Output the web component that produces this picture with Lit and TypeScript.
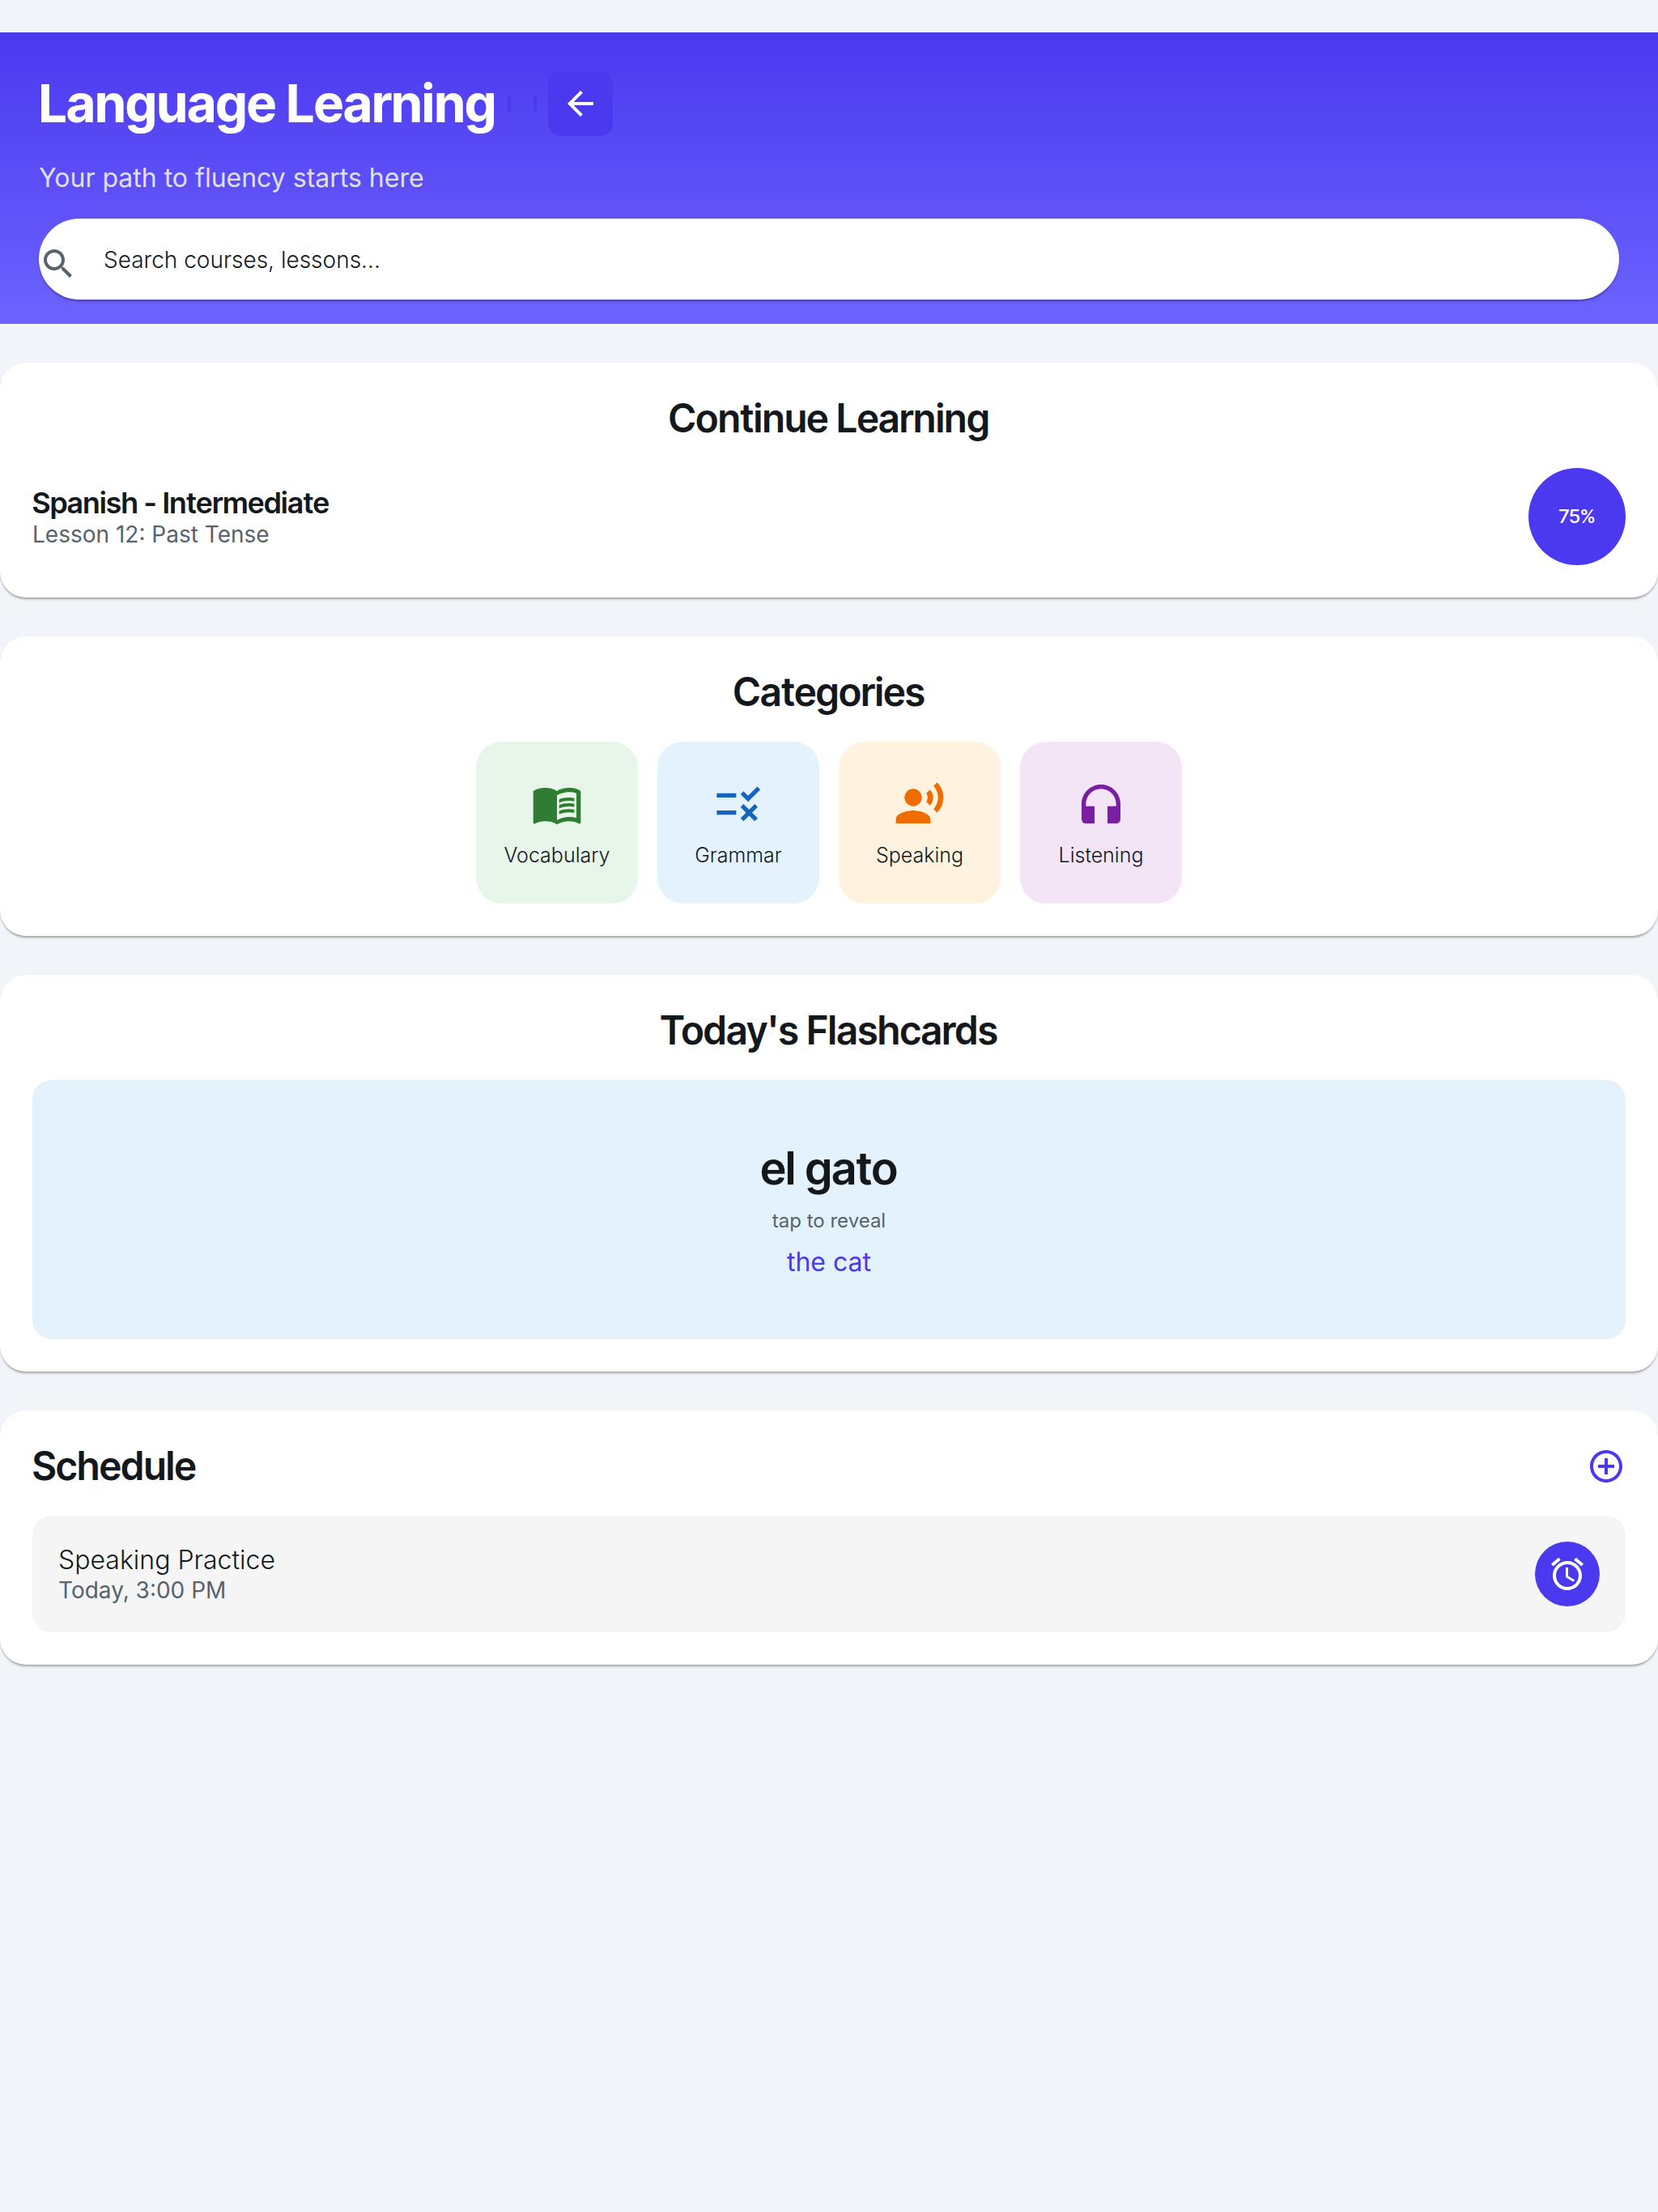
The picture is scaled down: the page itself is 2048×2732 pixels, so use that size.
import { LitElement, html, css, svg } from "lit";
import { customElement, property } from "lit/decorators.js";

const ICONS: Record<string, string[]> = {
  back: ["M20 11H7.83l5.59-5.59L12 4l-8 8 8 8 1.41-1.41L7.83 13H20v-2z"],
  search: [
    "M15.5 14h-.79l-.28-.27C15.41 12.59 16 11.11 16 9.5 16 5.91 13.09 3 9.5 3S3 5.91 3 9.5 5.91 16 9.5 16c1.61 0 3.09-.59 4.23-1.57l.27.28v.79l5 4.99L20.49 19l-4.99-5zm-6 0C7.01 14 5 11.99 5 9.5S7.01 5 9.5 5 14 7.01 14 9.5 11.99 14 9.5 14z",
  ],
  book: [
    "M21 5c-1.11-.35-2.33-.5-3.5-.5-1.95 0-4.05.4-5.5 1.5-1.45-1.1-3.55-1.5-5.5-1.5S2.45 4.9 1 6v14.65c0 .25.25.5.5.5.1 0 .15-.05.25-.05C3.1 20.45 5.05 20 6.5 20c1.95 0 4.05.4 5.5 1.5 1.35-.85 3.8-1.5 5.5-1.5 1.65 0 3.35.3 4.75 1.05.1.05.15.05.25.05.25 0 .5-.25.5-.5V6c-.6-.45-1.25-.75-2-1zm0 13.5c-1.1-.35-2.3-.5-3.5-.5-1.7 0-4.15.65-5.5 1.5V8c1.35-.85 3.8-1.5 5.5-1.5 1.2 0 2.4.15 3.5.5v11.5z",
    "M17.5 10.5c.88 0 1.73.09 2.5.26V9.24c-.79-.15-1.64-.24-2.5-.24-1.7 0-3.24.29-4.5.83v1.66c1.13-.64 2.7-.99 4.5-.99zM13 12.49v1.66c1.13-.64 2.7-.99 4.5-.99.88 0 1.73.09 2.5.26V11.9c-.79-.15-1.64-.24-2.5-.24-1.7 0-3.24.3-4.5.83zM17.5 14.33c-1.7 0-3.24.29-4.5.83v1.66c1.13-.64 2.7-.99 4.5-.99.88 0 1.73.09 2.5.26v-1.52c-.79-.16-1.64-.24-2.5-.24z",
  ],
  rule: [
    "M16.54 11L13 7.46l1.41-1.41 2.12 2.12 4.24-4.24 1.41 1.41L16.54 11zM11 7H2v2h9V7zm10 6.41L19.59 12 17 14.59 14.41 12 13 13.41 15.59 16 13 18.59 14.41 20 17 17.41 19.59 20 21 18.59 18.41 16 21 13.41zM11 15H2v2h9v-2z",
  ],
  voice: [
    "M9 5a4 4 0 1 0 0 8 4 4 0 1 0 0-8z",
    "M9 15c-2.67 0-8 1.34-8 4v2h16v-2c0-2.66-5.33-4-8-4zm7.76-9.64l-1.68 1.69c.84 1.18.84 2.71 0 3.89l1.68 1.69c2.02-2.02 2.02-5.07 0-7.27zM20.07 2l-1.63 1.63c2.77 3.02 2.77 7.56 0 10.74L20.07 16c3.9-3.89 3.91-9.95 0-14z",
  ],
  headphones: [
    "M12 3c-4.97 0-9 4.03-9 9v7c0 1.1.9 2 2 2h4v-8H5v-1c0-3.87 3.13-7 7-7s7 3.13 7 7v1h-4v8h4c1.1 0 2-.9 2-2v-7c0-4.97-4.03-9-9-9z",
  ],
  add: [
    "M13 7h-2v4H7v2h4v4h2v-4h4v-2h-4V7zm-1-5C6.48 2 2 6.48 2 12s4.48 10 10 10 10-4.48 10-10S17.52 2 12 2zm0 18c-4.41 0-8-3.59-8-8s3.59-8 8-8 8 3.59 8 8-3.59 8-8 8z",
  ],
  alarm: [
    "M22 5.72l-4.6-3.86-1.29 1.53 4.6 3.86L22 5.72zM7.88 3.39L6.6 1.86 2 5.71l1.29 1.53 4.59-3.85zM12.5 8H11v6l4.75 2.85.75-1.23-4-2.37V8zM12 4c-4.97 0-9 4.03-9 9s4.02 9 9 9c4.97 0 9-4.03 9-9s-4.03-9-9-9zm0 16c-3.87 0-7-3.13-7-7s3.13-7 7-7 7 3.13 7 7-3.13 7-7 7z",
  ],
};

@customElement("ll-icon")
export class LlIcon extends LitElement {
  @property() name = "";

  static styles = css`
    :host {
      display: block;
      flex: none;
      width: 48px;
      height: 48px;
    }
    .glyph {
      display: block;
      width: 100%;
      height: 100%;
      fill: currentColor;
    }
  `;

  render() {
    return html`<svg class="glyph" viewBox="0 0 24 24" aria-hidden="true">
      ${(ICONS[this.name] ?? []).map((d) => svg`<path d=${d}></path>`)}
    </svg>`;
  }
}

const CATEGORIES = [
  { label: "Vocabulary", icon: "book", tone: "green" },
  { label: "Grammar", icon: "rule", tone: "blue" },
  { label: "Speaking", icon: "voice", tone: "orange" },
  { label: "Listening", icon: "headphones", tone: "purple" },
];

@customElement("app-root")
export class AppRoot extends LitElement {
  static styles = css`
    :host {
      --display: "Inter Tight", Inter, "Liberation Sans", sans-serif;
      --lift: 0 3px 3px -1px rgba(0, 0, 0, 0.3), 0 1px 2px rgba(0, 0, 0, 0.08);
      display: block;
      box-sizing: border-box;
      min-height: 100vh;
      padding-top: 40px;
      background: #f1f4f8;
      color: #14181b;
      font-family: Inter, "Liberation Sans", sans-serif;
      font-size: 28px;
      line-height: 34px;
    }
    *,
    *::before,
    *::after {
      box-sizing: border-box;
    }
    h1,
    h2,
    h3,
    p {
      margin: 0;
    }
    button {
      margin: 0;
      padding: 0;
      border: 0;
      background: none;
      font: inherit;
      color: inherit;
      cursor: pointer;
    }
    .page {
      display: flex;
      flex-direction: column;
      gap: 48px;
    }
    .hero {
      display: flex;
      flex-direction: column;
      gap: 30px;
      padding: 48px 48px 30px;
      background: linear-gradient(#4b39ef, #6c63ff);
    }
    .hero-row {
      display: flex;
      align-items: center;
      gap: 14px;
      padding-bottom: 2px;
    }
    .title {
      color: #fff;
      font-family: var(--display);
      font-size: 64px;
      line-height: 78px;
      font-weight: 700;
    }
    .handle {
      width: 36px;
      height: 20px;
      border: solid #4b39ef;
      border-width: 0 4px;
      border-radius: 2px;
    }
    .back {
      display: grid;
      place-items: center;
      width: 80px;
      height: 80px;
      border-radius: 16px;
      background: #4b39ef;
      color: #fff;
    }
    .subtitle {
      color: #e0e0e0;
      font-size: 32px;
      line-height: 40px;
    }
    .search {
      display: flex;
      align-items: flex-end;
      gap: 32px;
      padding: 20px 0;
      border-radius: 50px;
      background: #fff;
      box-shadow: var(--lift);
      color: #57636c;
    }
    .search-input {
      flex: 1;
      min-width: 0;
      height: 60px;
      padding: 2px 0 0;
      border: 0;
      outline: 0;
      background: none;
      font: inherit;
      font-weight: 300;
      color: #14181b;
    }
    .search-input::placeholder {
      color: #14181b;
      opacity: 1;
    }
    .card {
      display: flex;
      flex-direction: column;
      gap: 32px;
      padding: 40px;
      border-radius: 32px;
      background: #fff;
      box-shadow: var(--lift);
    }
    .heading {
      font-family: var(--display);
      font-size: 48px;
      line-height: 58px;
      font-weight: 600;
      text-align: center;
    }
    .row {
      display: flex;
      align-items: center;
      justify-content: space-between;
    }
    .course {
      font-family: var(--display);
      font-size: 36px;
      line-height: 44px;
      font-weight: 600;
    }
    .muted {
      color: #57636c;
    }
    .progress {
      display: grid;
      place-items: center;
      width: 120px;
      height: 120px;
      border-radius: 50%;
      background: #4b39ef;
      color: #fff;
      font-family: var(--display);
      font-size: 24px;
      font-weight: 500;
    }
    .tiles {
      display: flex;
      flex-wrap: wrap;
      justify-content: center;
      gap: 24px;
    }
    .tile {
      display: flex;
      flex-direction: column;
      align-items: center;
      justify-content: center;
      gap: 16px;
      width: 200px;
      height: 200px;
      border-radius: 32px;
    }
    .tile ll-icon {
      width: 64px;
      height: 64px;
    }
    .tile-label {
      color: #14181b;
      font-size: 25px;
      line-height: 30px;
      font-weight: 300;
    }
    .green {
      background: #e8f5e9;
      color: #2e7d32;
    }
    .blue {
      background: #e3f2fd;
      color: #1565c0;
    }
    .orange {
      background: #fff3e0;
      color: #ef6c00;
    }
    .purple {
      background: #f3e5f5;
      color: #7b1fa2;
    }
    .flashcard {
      display: flex;
      flex-direction: column;
      align-items: center;
      justify-content: center;
      gap: 16px;
      min-height: 320px;
      border-radius: 24px;
      background: #e3f2fd;
    }
    .word {
      font-family: var(--display);
      font-size: 56px;
      line-height: 68px;
      font-weight: 600;
    }
    .hint {
      color: #57636c;
      font-size: 24px;
      line-height: 30px;
    }
    .answer {
      color: #4b39ef;
      font-size: 32px;
      line-height: 40px;
    }
    .add {
      color: #4b39ef;
    }
    .event {
      padding: 32px;
      border-radius: 24px;
      background: #f5f5f5;
    }
    .event-name {
      font-size: 32px;
      line-height: 40px;
      font-weight: 300;
    }
    .alarm {
      display: grid;
      place-items: center;
      width: 80px;
      height: 80px;
      border-radius: 50%;
      background: #4b39ef;
      color: #fff;
    }
  `;

  render() {
    return html`
      <main class="page">
        <header class="hero">
          <div class="hero-row">
            <h1 class="title">Language Learning</h1>
            <span class="handle"></span>
            <button class="back" type="button" aria-label="Back">
              <ll-icon name="back"></ll-icon>
            </button>
          </div>
          <p class="subtitle">Your path to fluency starts here</p>
          <label class="search">
            <ll-icon name="search"></ll-icon>
            <input
              class="search-input"
              type="text"
              aria-label="Search courses, lessons..."
              placeholder="Search courses, lessons..."
            />
          </label>
        </header>

        <section class="card">
          <h2 class="heading">Continue Learning</h2>
          <div class="row">
            <div>
              <h3 class="course">Spanish - Intermediate</h3>
              <p class="muted">Lesson 12: Past Tense</p>
            </div>
            <div class="progress">75%</div>
          </div>
        </section>

        <section class="card">
          <h2 class="heading">Categories</h2>
          <div class="tiles">
            ${CATEGORIES.map(
              (c) => html`<button class="tile ${c.tone}" type="button">
                <ll-icon name=${c.icon}></ll-icon>
                <span class="tile-label">${c.label}</span>
              </button>`
            )}
          </div>
        </section>

        <section class="card">
          <h2 class="heading">Today's Flashcards</h2>
          <button class="flashcard" type="button">
            <span class="word">el gato</span>
            <span class="hint">tap to reveal</span>
            <span class="answer">the cat</span>
          </button>
        </section>

        <section class="card">
          <div class="row">
            <h2 class="heading">Schedule</h2>
            <button class="add" type="button" aria-label="Add to schedule">
              <ll-icon name="add"></ll-icon>
            </button>
          </div>
          <div class="row event">
            <div>
              <h3 class="event-name">Speaking Practice</h3>
              <p class="muted">Today, 3:00 PM</p>
            </div>
            <button class="alarm" type="button" aria-label="Set reminder">
              <ll-icon name="alarm"></ll-icon>
            </button>
          </div>
        </section>
      </main>
    `;
  }
}
